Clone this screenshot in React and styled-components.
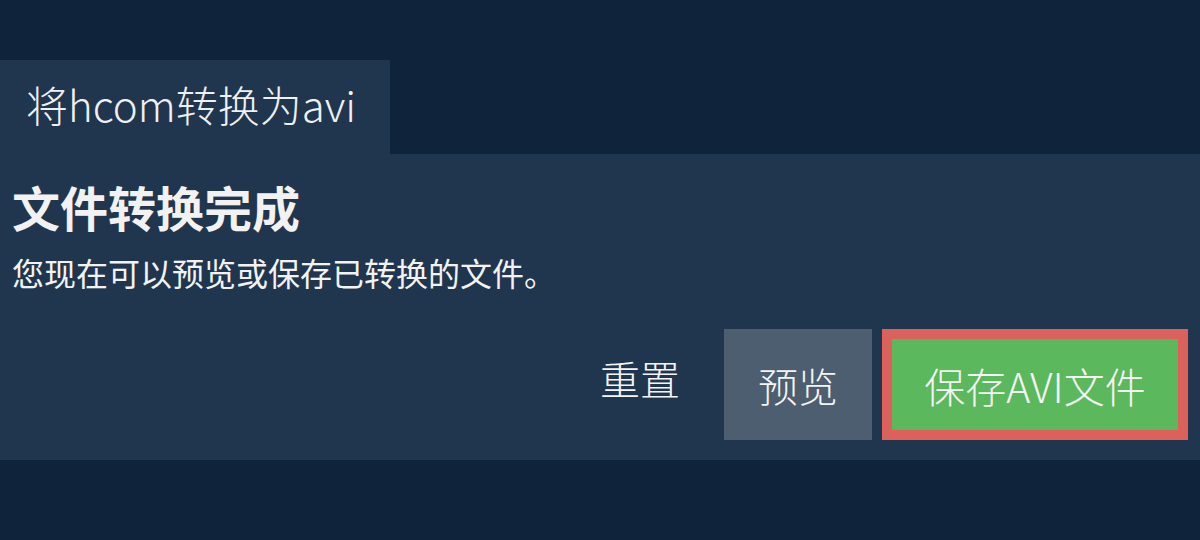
import React from "react";
import styled, { createGlobalStyle } from "styled-components";

const Global = createGlobalStyle`
  html, body { margin: 0; padding: 0; background: #0f233a; }
  body { font-family: "Noto Sans CJK SC", sans-serif; color: #f2f2f2; }
  * { box-sizing: border-box; }
`;

const Page = styled.div`
  width: 1200px;
  height: 540px;
  padding-top: 60px;
  background: #0f233a;
`;

const Tab = styled.div`
  display: inline-flex;
  align-items: center;
  width: 390px;
  height: 94px;
  padding: 0 0 8px 26px;
  background: #20364e;
  font-size: 42px;
  font-family: "Noto Sans CJK SC", sans-serif;
  font-weight: 300;
  color: #eef0f2;
`;

const Panel = styled.section`
  background: #20364e;
  padding: 22px 12px 20px 12px;
`;

const Heading = styled.h1`
  margin: 0;
  font-family: "Noto Sans CJK SC", sans-serif;
  font-size: 48px;
  font-weight: 700;
  line-height: 60px;
  color: #f2f2f2;
`;

const Sub = styled.p`
  margin: 13px 0 0;
  font-family: "Noto Sans CJK SC", sans-serif;
  font-size: 32px;
  line-height: 46px;
  color: #f2f2f2;
`;

const Actions = styled.div`
  display: flex;
  justify-content: flex-end;
  align-items: stretch;
  gap: 10px;
  margin-top: 34px;
  height: 111px;
`;

const Button = styled.button`
  display: flex;
  align-items: center;
  justify-content: center;
  border: ${(p) => (p.$highlight ? "10px solid #dc615c" : "none")};
  background: ${(p) =>
    p.$variant === "primary" ? "#5cb85c" : p.$variant === "muted" ? "#4d5e70" : "transparent"};
  color: #f4f4f4;
  font-family: "Noto Sans CJK SC", sans-serif;
  font-weight: 300;
  font-size: ${(p) => p.$size || 40}px;
  padding: 0;
  padding-bottom: ${(p) => (p.$variant ? 0 : 14)}px;
  width: ${(p) => p.$w}px;
  cursor: pointer;
`;

export default function App() {
  return (
    <>
      <Global />
      <Page>
        <Tab>将hcom转换为avi</Tab>
        <Panel>
          <Heading>文件转换完成</Heading>
          <Sub>您现在可以预览或保存已转换的文件。</Sub>
          <Actions>
            <Button $w={148}>重置</Button>
            <Button $variant="muted" $w={148}>预览</Button>
            <Button $variant="primary" $highlight $size={41} $w={306}>保存AVI文件</Button>
          </Actions>
        </Panel>
      </Page>
    </>
  );
}
